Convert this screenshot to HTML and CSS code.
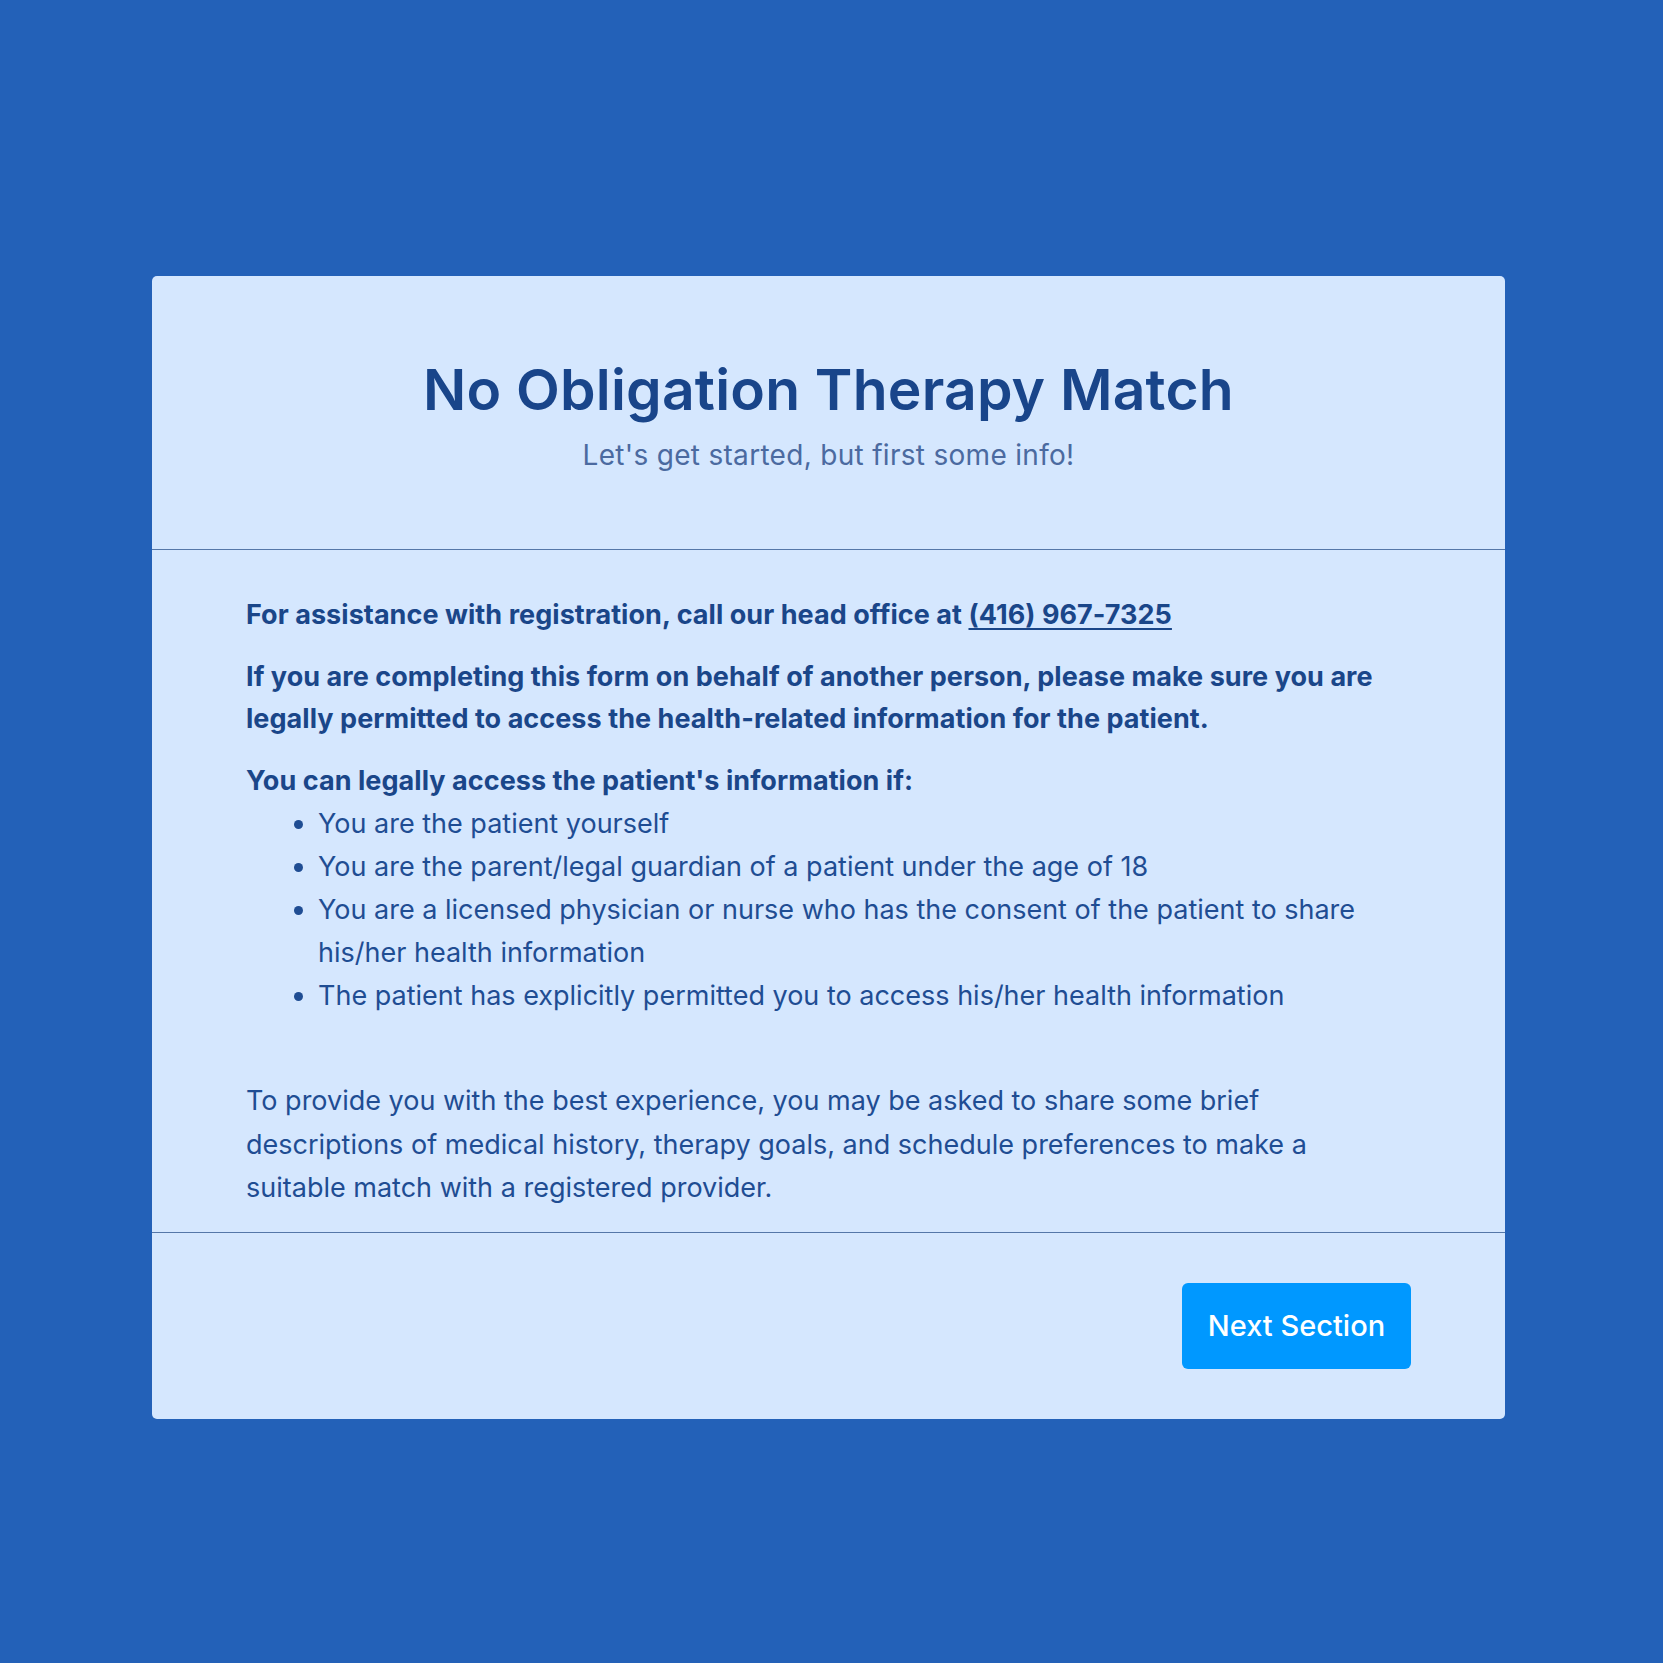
FILE: index.html
```html
<!DOCTYPE html>
<html lang="en">
<head>
<meta charset="utf-8">
<title>No Obligation Therapy Match</title>
<link rel="stylesheet" href="styles.css">
</head>
<body>
<main class="page">
  <section class="card">
    <header class="card-header">
      <h1 class="title">No Obligation Therapy Match</h1>
      <p class="subtitle">Let's get started, but first some info!</p>
    </header>
    <div class="card-body">
      <p class="strong">For assistance with registration, call our head office at <a class="phone" href="#">(416) 967-7325</a></p>
      <p class="strong">If you are completing this form on behalf of another person, please make sure you are legally permitted to access the health-related information for the patient.</p>
      <p class="strong tight">You can legally access the patient's information if:</p>
      <ul class="list">
        <li>You are the patient yourself</li>
        <li>You are the parent/legal guardian of a patient under the age of 18</li>
        <li>You are a licensed physician or nurse who has the consent of the patient to share his/her health information</li>
        <li>The patient has explicitly permitted you to access his/her health information</li>
      </ul>
      <p class="note">To provide you with the best experience, you may be asked to share some brief descriptions of medical history, therapy goals, and schedule preferences to make a suitable match with a registered provider.</p>
    </div>
    <footer class="card-footer">
      <button class="btn" type="button">Next Section</button>
    </footer>
  </section>
</main>
</body>
</html>
```

FILE: styles.css
```css
* { box-sizing: border-box; }
html, body { margin: 0; padding: 0; }
body {
  background: #2361b8;
  font-family: Inter, "Noto Sans", sans-serif;
  color: #1b4689;
  width: 1663px;
  height: 1663px;
}
.page {
  display: flex;
  justify-content: flex-start;
  padding-top: 276px;
  padding-left: 152px;
}
.card {
  width: 1353px;
  background: #d5e7fe;
  border-radius: 5px;
  overflow: hidden;
}
.card-header {
  height: 274px;
  border-bottom: 1px solid #5577a8;
  text-align: center;
  padding-top: 82px;
}
.title {
  margin: 0;
  font-size: 57px;
  font-weight: 600;
  line-height: 64px;
  color: #19458a;
  letter-spacing: 0.2px;
}
.subtitle {
  margin: 16px 0 0;
  font-size: 28px;
  line-height: 34px;
  color: #4b6aa0;
  font-weight: 400;
  letter-spacing: 0.3px;
}
.card-body {
  padding: 44px 94px 22px;
  font-size: 27px;
  line-height: 42.5px;
}
.card-body p { margin: 0 0 19px; }
.strong { font-weight: 700; color: #1a4689; letter-spacing: 0.05px; }
.strong.tight { margin-bottom: 0; }
.phone { color: #1a4689; text-decoration: underline; text-underline-offset: 4px; text-decoration-thickness: 2px; }
.list {
  margin: 0 0 62px;
  padding-left: 72px;
  color: #1f4d93;
}
.list li { line-height: 43px; }
.card-body .note {
  margin: 0;
  max-width: 1100px;
  color: #1f4d93;
  line-height: 43.5px;
}
.card-footer {
  border-top: 1px solid #5577a8;
  height: 187px;
  display: flex;
  justify-content: flex-end;
  align-items: center;
  padding-right: 94px;
}
.btn {
  background: #0098ff;
  color: #ffffff;
  border: none;
  border-radius: 6px;
  width: 229px;
  height: 86px;
  font-family: Inter, "Noto Sans", sans-serif;
  font-size: 29px;
  font-weight: 500;
  padding: 0;
}
```
